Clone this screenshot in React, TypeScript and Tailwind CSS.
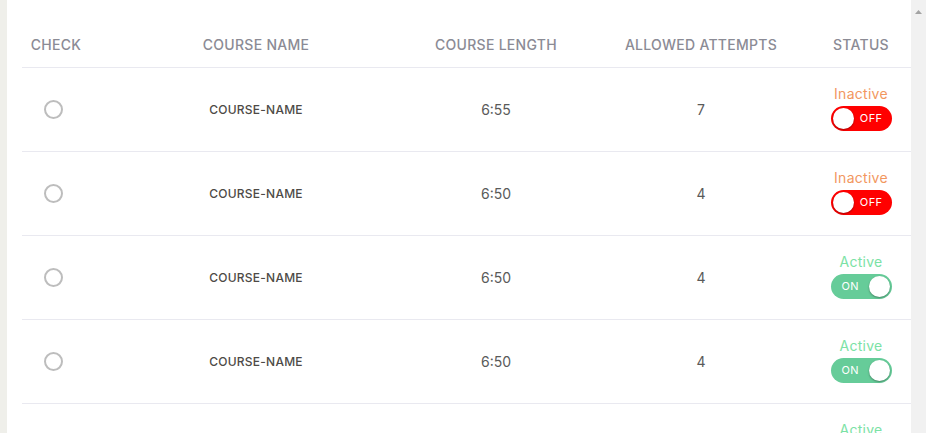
import React from "react";

type Row = { len: string; attempts: string; active: boolean };

const rows: Row[] = [
  { len: "6:55", attempts: "7", active: false },
  { len: "6:50", attempts: "4", active: false },
  { len: "6:50", attempts: "4", active: true },
  { len: "6:50", attempts: "4", active: true },
  { len: "6:50", attempts: "4", active: true },
];

const grid = "grid grid-cols-[68px_332px_148px_262px_58px_1fr]";

function Toggle({ on }: { on: boolean }) {
  if (on) {
    return (
      <div className="flex h-[25px] w-[61px] items-center justify-between rounded-full bg-[#66cc99] pl-[11px] pr-[2px]">
        <span className="text-[11px] leading-none tracking-[0.04em] text-white">ON</span>
        <span className="h-[21px] w-[21px] rounded-full bg-white shadow-[0_1px_2px_rgba(0,0,0,0.35)]" />
      </div>
    );
  }
  return (
    <div className="flex h-[25px] w-[61px] items-center justify-between rounded-full bg-[#ff0000] pl-[2px] pr-[9px]">
      <span className="h-[21px] w-[21px] rounded-full bg-white shadow-[0_1px_2px_rgba(0,0,0,0.35)]" />
      <span className="text-[11px] leading-none tracking-[0.04em] text-white">OFF</span>
    </div>
  );
}

export default function App() {
  return (
    <div className="flex h-[433px] w-[933px] overflow-hidden bg-white font-['Inter',sans-serif]">
      <div className="w-[7px] shrink-0 bg-[#efefea]" />
      <div className="flex-1 pl-[15px] pt-[21px]">
        <div className="w-[889px]">
          <div className={`${grid} h-[47px] items-center border-b border-[#e9e9f0] text-[14px] font-medium uppercase tracking-[0.02em] text-[#8b8b95]`}>
            <div className="text-center">Check</div>
            <div className="text-center">Course Name</div>
            <div className="text-center">Course Length</div>
            <div className="text-center">Allowed Attempts</div>
            <div className="text-center">Status</div>
            <div />
          </div>
          {rows.map((r, i) => (
            <div key={i} className={`${grid} h-[84px] items-center border-b border-[#e9e9f0]`}>
              <div className="flex justify-center pr-[6px]">
                <span className="h-[19px] w-[19px] rounded-full border-[2.5px] border-[#bdbdbd]" />
              </div>
              <div className="text-center text-[12px] font-medium tracking-[0.02em] text-[#4d4a46]">COURSE-NAME</div>
              <div className="text-center text-[14px] text-[#5a5a5a]">{r.len}</div>
              <div className="text-center text-[14px] text-[#5a5a5a]">{r.attempts}</div>
              <div className="flex flex-col items-center gap-[5px] pb-[1px]">
                <span className={`text-[14px] leading-[14px] tracking-[0.02em] ${r.active ? "text-[#7be2a5]" : "text-[#f2975f]"}`}>
                  {r.active ? "Active" : "Inactive"}
                </span>
                <Toggle on={r.active} />
              </div>
              <div />
            </div>
          ))}
        </div>
      </div>
      <div className="flex w-[15px] shrink-0 justify-center bg-[#f1f1f1] pt-[10px]">
        <svg width="7" height="4" viewBox="0 0 7 4">
          <path d="M3.5 0 L7 4 L0 4 Z" fill="#a3a3a3" />
        </svg>
      </div>
      <div className="w-[7px] shrink-0 bg-white" />
    </div>
  );
}
